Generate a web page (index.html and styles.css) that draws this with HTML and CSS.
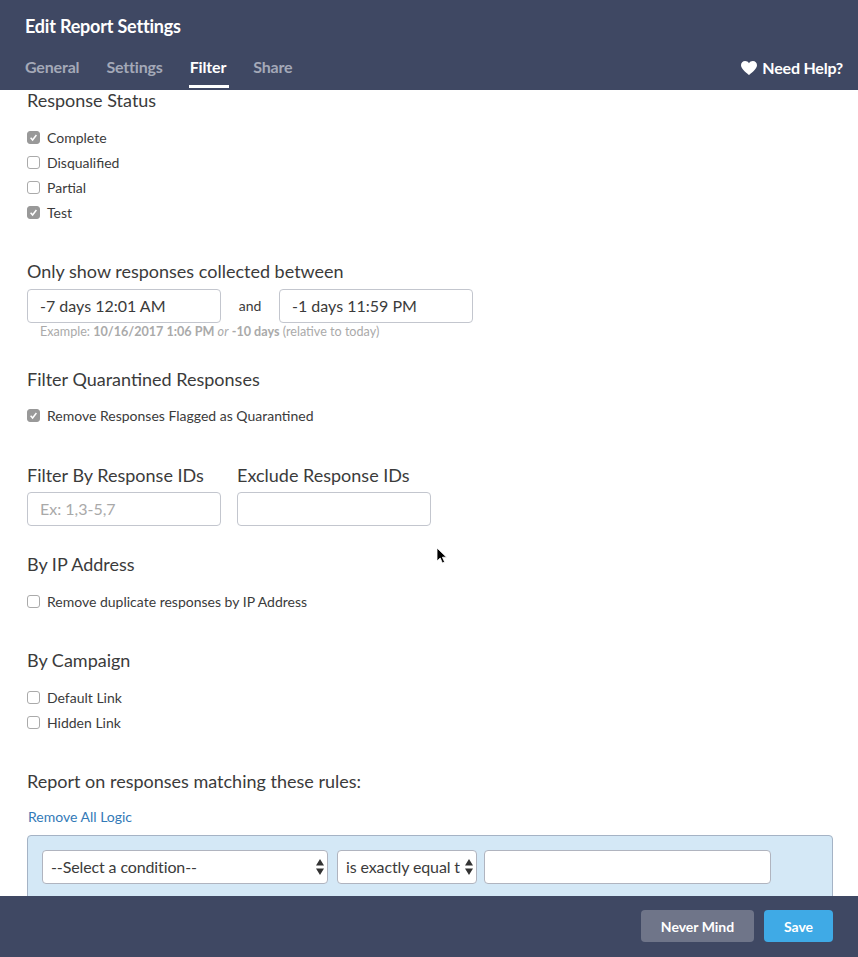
FILE: index.html
```html
<!DOCTYPE html>
<html lang="en">
<head>
<meta charset="utf-8">
<title>Edit Report Settings</title>
<link rel="stylesheet" href="styles.css">
</head>
<body>
<div class="app">
  <header class="top">
    <h1 class="title">Edit Report Settings</h1>
    <div class="tabbar">
      <nav class="tabs">
        <a class="tab">General</a>
        <a class="tab">Settings</a>
        <a class="tab active">Filter</a>
        <a class="tab">Share</a>
      </nav>
      <a class="help">
        <svg class="heart" viewBox="0 0 16 14" width="16" height="14"><path d="M8 14C6.8 12.9 0 8.2 0 4.2 0 1.7 1.8 0 4.1 0 5.7 0 7.2.9 8 2.3 8.8.9 10.3 0 11.9 0 14.2 0 16 1.7 16 4.2 16 8.2 9.2 12.9 8 14Z" fill="#fff"/></svg>
        Need Help?
      </a>
    </div>
  </header>

  <main class="content">
    <section class="sec sec-status">
      <h2 class="head">Response Status</h2>
      <ul class="checks">
        <li class="check"><span class="box on"><svg viewBox="0 0 13 13" width="13" height="13"><path d="M3.6 6.8 5.6 9 9.4 4" fill="none" stroke="#fff" stroke-width="1.5"/></svg></span>Complete</li>
        <li class="check"><span class="box"></span>Disqualified</li>
        <li class="check"><span class="box"></span>Partial</li>
        <li class="check"><span class="box on"><svg viewBox="0 0 13 13" width="13" height="13"><path d="M3.6 6.8 5.6 9 9.4 4" fill="none" stroke="#fff" stroke-width="1.5"/></svg></span>Test</li>
      </ul>
    </section>

    <section class="sec sec-dates">
      <h2 class="head">Only show responses collected between</h2>
      <div class="dates">
        <input class="field wide" type="text" value="-7 days 12:01 AM">
        <span class="and">and</span>
        <input class="field wide" type="text" value="-1 days 11:59 PM">
      </div>
      <p class="hint">Example: <b>10/16/2017 1:06 PM</b> <i>or</i> <b>-10 days</b> (relative to today)</p>
    </section>

    <section class="sec sec-quar">
      <h2 class="head">Filter Quarantined Responses</h2>
      <ul class="checks">
        <li class="check"><span class="box on"><svg viewBox="0 0 13 13" width="13" height="13"><path d="M3.6 6.8 5.6 9 9.4 4" fill="none" stroke="#fff" stroke-width="1.5"/></svg></span>Remove Responses Flagged as Quarantined</li>
      </ul>
    </section>

    <section class="sec sec-ids">
      <div class="idcol">
        <h2 class="head">Filter By Response IDs</h2>
        <input class="field wide" type="text" placeholder="Ex: 1,3-5,7">
      </div>
      <div class="idcol">
        <h2 class="head">Exclude Response IDs</h2>
        <input class="field wide" type="text">
      </div>
    </section>

    <section class="sec sec-ip">
      <h2 class="head">By IP Address</h2>
      <ul class="checks">
        <li class="check"><span class="box"></span>Remove duplicate responses by IP Address</li>
      </ul>
    </section>

    <section class="sec sec-camp">
      <h2 class="head">By Campaign</h2>
      <ul class="checks">
        <li class="check"><span class="box"></span>Default Link</li>
        <li class="check"><span class="box"></span>Hidden Link</li>
      </ul>
    </section>

    <section class="sec sec-rules">
      <h2 class="head">Report on responses matching these rules:</h2>
      <a class="logic">Remove All Logic</a>
      <div class="panel">
        <div class="selwrap sel-a">
          <select class="sel"><option>--Select a condition--</option></select>
          <svg class="arrows" viewBox="0 0 8 16" width="8" height="16"><path d="M4 0 8 6.5H0ZM4 16 0 9.5H8Z" fill="#333"/></svg>
        </div>
        <div class="selwrap sel-b">
          <select class="sel"><option>is exactly equal to</option></select>
          <svg class="arrows" viewBox="0 0 8 16" width="8" height="16"><path d="M4 0 8 6.5H0ZM4 16 0 9.5H8Z" fill="#333"/></svg>
        </div>
        <input class="field val" type="text">
      </div>
    </section>

    <svg class="cursor" viewBox="0 0 12 18" width="12" height="18"><path d="M1 1V14L4.2 11 6.4 16 8.6 15 6.4 10.2H10.5Z" fill="#000" stroke="#fff" stroke-width=".8"/></svg>
  </main>

  <footer class="bottom">
    <button class="btn ghost">Never Mind</button>
    <button class="btn save">Save</button>
  </footer>
</div>
</body>
</html>
```

FILE: styles.css
```css
* { box-sizing: border-box; }
html, body { margin: 0; padding: 0; }
body { font-family: Lato, "Liberation Sans", sans-serif; color: #3b3b3b; background: #fff; }
.app { width: 858px; height: 957px; display: flex; flex-direction: column; overflow: hidden; }

.top { flex: none; height: 90px; background: #3f4863; color: #fff; padding: 0 15px 0 25px; display: flex; flex-direction: column; }
.title { margin: 0; padding-top: 15px; font-size: 18px; line-height: 22px; font-weight: 700; letter-spacing: -.2px; }
.tabbar { margin-top: 19px; display: flex; justify-content: space-between; align-items: flex-start; }
.tabs { display: flex; gap: 27px; }
.tab { position: relative; font-size: 16px; line-height: 22px; font-weight: 700; color: #a4a9b8; letter-spacing: -.17px; }
.tab.active { color: #fff; }
.tab.active::after { content: ""; position: absolute; left: -1px; right: -3px; top: 29px; height: 3px; background: #fff; }
.help { display: flex; align-items: center; gap: 5px; font-size: 16px; line-height: 22px; font-weight: 700; color: #fff; letter-spacing: -.2px; padding-top: 1px; }
.heart { display: block; }

.content { position: relative; flex: 1; min-height: 0; overflow: hidden; padding-left: 27px; }
.sec { margin: 0; }
.head { margin: 0; padding-bottom: 2px; font-size: 18px; line-height: 20px; font-weight: 400; color: #3b3b3b; }
.checks { list-style: none; margin: 0; padding: 0; display: flex; flex-direction: column; gap: 5px; }
.check { display: flex; align-items: center; gap: 7px; height: 20px; font-size: 14px; line-height: 20px; color: #3b3b3b; }
.box { flex: none; width: 13px; height: 13px; margin-top: -1px; border: 1px solid #aaa; border-radius: 3px; background: #fff; position: relative; }
.box.on { background: #999; border-color: #999; }
.box svg { position: absolute; left: -1px; top: -1px; display: block; }

.sec-status .checks { margin-top: 16px; }
.sec-dates { margin-top: 38px; }
.dates { display: flex; align-items: center; margin-top: 6px; }
.field { height: 34px; border: 1px solid #c3c6ce; border-radius: 4px; background: #fff; font-family: inherit; font-size: 16px; color: #3b3b3b; padding: 0 12px 2px; outline: none; }
.field::placeholder { color: #a9a9a9; opacity: 1; }
.wide { width: 194px; }
.and { width: 58px; text-align: center; font-size: 14px; color: #3b3b3b; padding-bottom: 2px; }
.hint { margin: 0; padding: 1px 0 0 13px; font-size: 12.6px; line-height: 15px; color: #aaa; font-weight: 400; }
.hint b { font-weight: 700; }
.sec-quar { margin-top: 30px; }
.sec-quar .checks { margin-top: 15px; }
.sec-ids { margin-top: 39px; display: flex; gap: 16px; }
.idcol .field { display: block; margin-top: 5px; }
.sec-ip { margin-top: 28px; }
.sec-ip .checks { margin-top: 16px; }
.sec-camp { margin-top: 38px; }
.sec-camp .checks { margin-top: 16px; }
.sec-rules { margin-top: 38px; }
.logic { display: block; margin: 14px 0 0 1px; font-size: 14px; line-height: 20px; color: #337ab7; }
.panel { width: 806px; height: 120px; margin-top: 8px; padding: 14px; border: 1px solid #a5b3c5; border-radius: 4px; background: #d4e8f6; display: flex; gap: 9px; align-items: flex-start; }
.selwrap { position: relative; flex: none; height: 34px; }
.sel-a { width: 286px; }
.sel-b { width: 140px; margin-right: -2px; }
.sel { appearance: none; width: 100%; height: 100%; border: 1px solid #b0b4bf; border-radius: 4px; background: #fff; font-family: inherit; font-size: 16px; color: #3b3b3b; padding: 0 16px 2px 8px; outline: none; letter-spacing: -.12px; }
.arrows { position: absolute; right: 4px; top: 9px; display: block; }
.val { width: 287px; border-color: #b0b4bf; }
.cursor { position: absolute; left: 436px; top: 457px; display: block; }

.bottom { flex: none; height: 61px; background: #3f4863; padding: 14px 25px 0 0; display: flex; justify-content: flex-end; align-items: flex-start; gap: 10px; }
.btn { height: 32px; border: 0; border-radius: 4px; font-family: inherit; font-size: 14px; font-weight: 700; color: #fff; padding: 0; }
.ghost { width: 113px; background: #6f7589; }
.save { width: 69px; background: #3faae6; }
```
